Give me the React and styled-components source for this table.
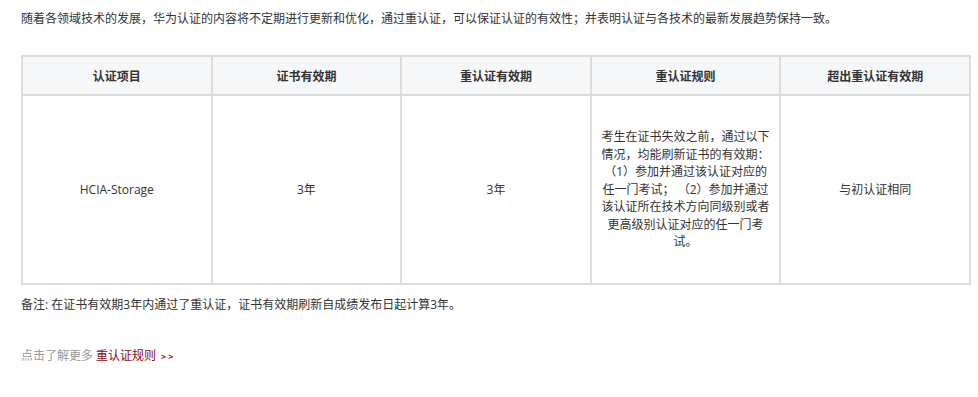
import React from 'react';
import styled, { createGlobalStyle } from 'styled-components';

const GlobalStyle = createGlobalStyle`
	body {
		margin: 0;
		background: #fff;
		font-family: 'Open Sans', 'Noto Sans CJK SC', sans-serif;
		color: #333;
	}
`;

const Page = styled.div`
	padding: 9px 21px 20px;
	font-size: 12px;
`;

const Intro = styled.p`
	margin: 0;
	line-height: 20px;
`;

const Table = styled.table`
	width: 950px;
	margin-top: 26px;
	border-collapse: collapse;
	table-layout: fixed;
	border: 2px solid #dcdcdc;
`;

const HeadCell = styled.th`
	height: 37px;
	padding: 0 10px;
	background: #f6f7f9;
	border: 2px solid #dcdcdc;
	font-weight: bold;
	font-size: 12px;
	color: #333;
	text-align: center;
`;

const Cell = styled.td`
	height: 187px;
	padding: 0 ${(p) => (p.$wide ? '7px' : '10px')};
	border: 2px solid #dcdcdc;
	text-align: center;
	vertical-align: middle;
	line-height: ${(p) => (p.$wide ? '17.5px' : '20px')};
	font-size: 12px;
`;

const Note = styled.p`
	margin: 10px 0 0;
	line-height: 20px;
`;

const More = styled.p`
	margin: 31px 0 0;
	line-height: 20px;
	color: #999;
`;

const RuleLink = styled.a`
	color: #8b0a10;
	text-decoration: none;
	margin-left: 3px;
`;

const Arrows = styled.span`
	color: #c7000b;
	font-size: 9px;
	font-weight: bold;
	letter-spacing: 2px;
	margin-left: 5px;
`;

const headers = ['认证项目', '证书有效期', '重认证有效期', '重认证规则', '超出重认证有效期'];

const App = () => {
	return (
		<Page>
			<GlobalStyle />
			<Intro>
				随着各领域技术的发展，华为认证的内容将不定期进行更新和优化，通过重认证，可以保证认证的有效性；并表明认证与各技术的最新发展趋势保持一致。
			</Intro>
			<Table>
				<thead>
					<tr>
						{headers.map((h) => (
							<HeadCell key={h}>{h}</HeadCell>
						))}
					</tr>
				</thead>
				<tbody>
					<tr>
						<Cell>HCIA-Storage</Cell>
						<Cell>3年</Cell>
						<Cell>3年</Cell>
						<Cell $wide>
							考生在证书失效之前，通过以下情况，均能刷新证书的有效期： （1）参加并通过该认证对应的任一门考试；&nbsp;（2）参加并通过该认证所在技术方向同级别或者更高级别认证对应的任一门考试。
						</Cell>
						<Cell>与初认证相同</Cell>
					</tr>
				</tbody>
			</Table>
			<Note>备注: 在证书有效期3年内通过了重认证，证书有效期刷新自成绩发布日起计算3年。</Note>
			<More>
				点击了解更多
				<RuleLink href="#">重认证规则</RuleLink>
				<Arrows>&gt;&gt;</Arrows>
			</More>
		</Page>
	);
};

export default App;
